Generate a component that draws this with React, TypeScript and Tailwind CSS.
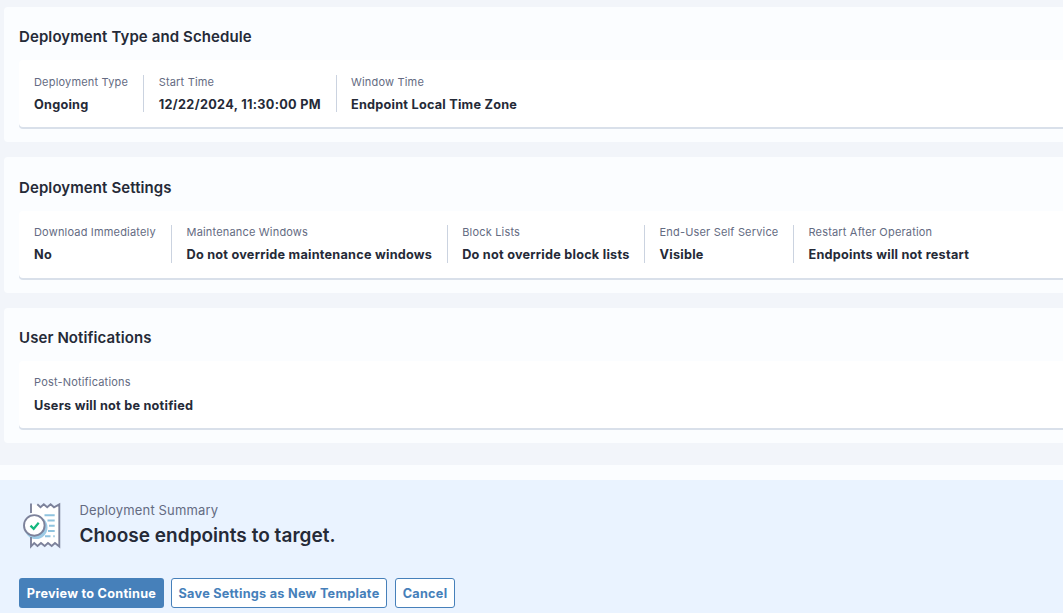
import clsx from "clsx";

type Field = { label: string; value: string };

const sections: { title: string; fields: Field[] }[] = [
  {
    title: "Deployment Type and Schedule",
    fields: [
      { label: "Deployment Type", value: "Ongoing" },
      { label: "Start Time", value: "12/22/2024, 11:30:00 PM" },
      { label: "Window Time", value: "Endpoint Local Time Zone" },
    ],
  },
  {
    title: "Deployment Settings",
    fields: [
      { label: "Download Immediately", value: "No" },
      { label: "Maintenance Windows", value: "Do not override maintenance windows" },
      { label: "Block Lists", value: "Do not override block lists" },
      { label: "End-User Self Service", value: "Visible" },
      { label: "Restart After Operation", value: "Endpoints will not restart" },
    ],
  },
  {
    title: "User Notifications",
    fields: [{ label: "Post-Notifications", value: "Users will not be notified" }],
  },
];

function FieldItem({ label, value }: Field) {
  // dates get slightly looser digits
  const isDate = /^\d/.test(value);
  return (
    <div className="h-[37.65px] border-r border-[#cbd3e0] pr-[14.6px] pl-[14.4px] whitespace-nowrap first:pr-[15.3px] first:pl-[15px] last:border-r-0">
      <p className="text-[11px] leading-[15px] tracking-[0.18px] text-[#646b82]">{label}</p>
      <p
        className={clsx(
          "mt-[5.35px] text-[12.7px] leading-[19px] font-bold",
          isDate ? "tracking-[0.32px]" : "tracking-[0.235px]",
        )}
      >
        {value}
      </p>
    </div>
  );
}

function Section({ title, fields }: { title: string; fields: Field[] }) {
  return (
    <section className="h-[135.4px] rounded-l bg-[#fbfdff] pt-[20.2px] pl-[15px]">
      <h2 className="h-[32.95px] text-[15px] leading-5 font-semibold tracking-[0.1px]">{title}</h2>
      <div className="flex h-[67px] rounded-l bg-white pt-[14.5px] shadow-[0_2px_0_#d9e0ea]">
        {fields.map((field) => (
          <FieldItem key={field.label} {...field} />
        ))}
      </div>
    </section>
  );
}

function SummaryIcon() {
  return (
    <svg width="38" height="47" viewBox="0 0 38 47" fill="none" aria-hidden="true">
      <path
        d="M8 2.500h6.300l3.200 3 3.300-3 3.400 3 3.400-3 3.400 3 5.300-3v42L32 41l-3.300 3-3.700-3-3.300 3-3.700-3-3.500 3-3.300-3L8 44z"
        fill="#fff"
      />
      <circle cx="13" cy="25.500" r="11.500" fill="#9dcbe6" />
      <path
        d="M21.500 13.300h10.200M24.500 18.500h7.200M26 23.700h5.700M25 29h6.700M22 34.300h5.500M30.300 34.300h1.400"
        stroke="#8fc3df"
        strokeWidth="1.900"
      />
      <path
        d="M8 1.500V11M14.300 2.300l3.200 3 3.300-3 3.400 3 3.400-3 3.400 3 5.300-3V44.500L32 41l-3.300 3-3.700-3-3.300 3-3.700-3-3.500 3-3.300-3L8 44.300V35"
        stroke="#7d829b"
        strokeWidth="1.900"
      />
      <circle cx="11.300" cy="23.400" r="10.300" fill="#fff" stroke="#7d829b" strokeWidth="1.900" />
      <path d="M7.500 23.600l3.200 3.200 5-6" stroke="#14b87e" strokeWidth="2.200" />
    </svg>
  );
}

export default function App() {
  return (
    <div className="h-[613px] overflow-hidden bg-[#fbfdff] font-['Inter',sans-serif] text-[#252a37]">
      <main className="flex h-[465px] flex-col gap-[15px] bg-[#f2f5fa] pt-[7px] pl-1">
        {sections.map((section) => (
          <Section key={section.title} {...section} />
        ))}
      </main>

      <footer className="mt-[15px] h-[133px] bg-[#eaf3ff] px-[19px] pt-[22px]">
        <div className="flex h-[76px]">
          <div className="w-[60.4px] pl-1">
            <SummaryIcon />
          </div>
          <div>
            <p className="text-[13px] leading-[17px] tracking-[0.16px] text-[#646b82]">Deployment Summary</p>
            <p className="mt-[5px] text-[19px] leading-6 font-semibold tracking-[0.03px]">
              Choose endpoints to target.
            </p>
          </div>
        </div>
        <div className="flex text-[12.7px] font-bold tracking-[0.26px] whitespace-nowrap text-[#4680ba]">
          <button className="h-[30px] w-[145px] rounded-[3px] bg-[#4680ba] pt-px text-white">
            Preview to Continue
          </button>
          <button className="ml-[7px] h-[30px] w-[216px] rounded-[3px] border border-[#4680ba] bg-white pt-px">
            Save Settings as New Template
          </button>
          <button className="ml-2 h-[30px] w-[60px] rounded-[3px] border border-[#4680ba] bg-white pt-px">
            Cancel
          </button>
        </div>
      </footer>
    </div>
  );
}
